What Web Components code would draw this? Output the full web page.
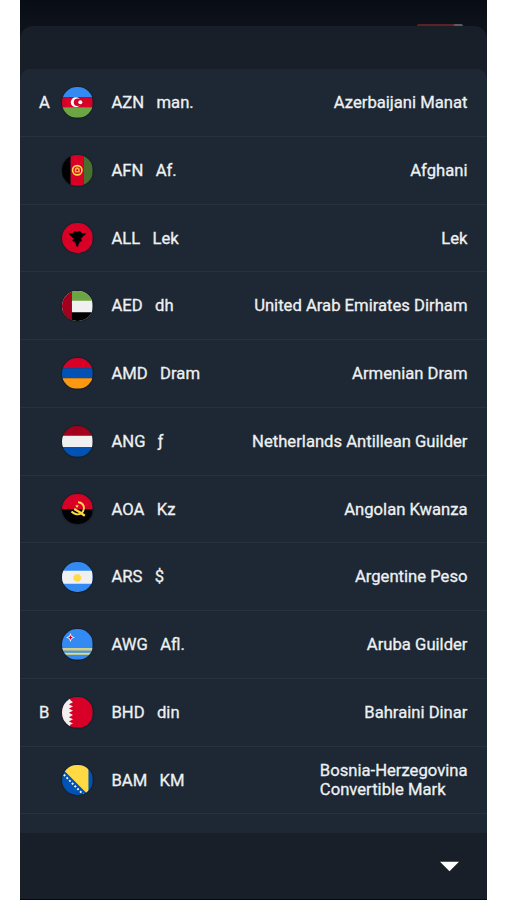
<!DOCTYPE html>
<html lang="en">
<head>
<meta charset="utf-8">
<meta name="viewport" content="width=device-width, initial-scale=1">
<title>Currencies</title>
<style>
  html, body {
    margin: 0;
    height: 100%;
    background: #fff;
    overflow: hidden;
  }
  body {
    font-family: Roboto, "Liberation Sans", sans-serif;
  }
</style>
</head>
<body>
<currency-sheet>
  <currency-row letter="A" code="AZN" symbol="man.">Azerbaijani Manat</currency-row>
  <currency-row code="AFN" symbol="Af.">Afghani</currency-row>
  <currency-row code="ALL" symbol="Lek">Lek</currency-row>
  <currency-row code="AED" symbol="dh">United Arab Emirates Dirham</currency-row>
  <currency-row code="AMD" symbol="Dram">Armenian Dram</currency-row>
  <currency-row code="ANG" symbol="ƒ">Netherlands Antillean Guilder</currency-row>
  <currency-row code="AOA" symbol="Kz">Angolan Kwanza</currency-row>
  <currency-row code="ARS" symbol="$">Argentine Peso</currency-row>
  <currency-row code="AWG" symbol="Afl.">Aruba Guilder</currency-row>
  <currency-row letter="B" code="BHD" symbol="din">Bahraini Dinar</currency-row>
  <currency-row code="BAM" symbol="KM">Bosnia-Herzegovina<br>Convertible Mark</currency-row>
</currency-sheet>

<script>
// every flag is drawn in a 30x30 box and clipped to a circle
const FLAGS = {
  AZN: `
    <path fill="#338af3" d="M0 0h30v10H0z"/>
    <path fill="#d80027" d="M0 10h30v10H0z"/>
    <path fill="#6da544" d="M0 20h30v10H0z"/>
    <circle cx="13.6" cy="15" r="5" fill="#fff"/>
    <circle cx="15.400" cy="15" r="3.800" fill="#d80027"/>
    <circle cx="18" cy="15" r="2" fill="#fff"/>`,
  AFN: `
    <path fill="#000" d="M0 0h8.500v30H0z"/>
    <path fill="#d80027" d="M8.500 0h13v30h-13z"/>
    <path fill="#496e2d" d="M21.500 0H30v30h-8.500z"/>
    <circle cx="15" cy="15" r="4.600" fill="#d80027" stroke="#ffda44" stroke-width="1.600"/>
    <path fill="#ffda44" d="M12.500 17.200v-2.700a2.500 2.500 0 0 1 5 0v2.700z" opacity=".8"/>
    <circle cx="15" cy="15" r="1" fill="#d80027"/>`,
  ALL: `
    <path fill="#d80027" d="M0 0h30v30H0z"/>
    <path fill="#000" stroke="#000" stroke-width=".5" d="M23 10.300h-4.600c.6-.6.400-1.500-.4-1.800-.9-.3-2.200-.2-3 .5-.8-.7-2.100-.8-3-.5-.8.300-1 1.200-.4 1.800H7c.3 1.500 1.500 2.300 2.700 2.400-.1 1.100.7 2 1.900 2.100l.4 0c-.2.900-.9 1.700-1.700 2.300l1.300 1.200 1.700-.7-.5 2 1 .3v1.500l1.200 2.200 1.200-2.200v-1.500l1-.3-.5-2 1.700.7 1.300-1.200c-.8-.6-1.500-1.400-1.700-2.300l.4 0c1.200-.1 2-.9 1.900-2.100 1.200-.1 2.400-.9 2.700-2.400z"/>`,
  AED: `
    <path fill="#f0f0f0" d="M0 0h30v30H0z"/>
    <path fill="#6da544" d="M0 0h30v9.500H0z"/>
    <path fill="#000" d="M0 20.800h30V30H0z"/>
    <path fill="#a2001d" d="M0 0h9.800v30H0z"/>`,
  AMD: `
    <path fill="#d80027" d="M0 0h30v10H0z"/>
    <path fill="#0052b4" d="M0 10h30v10H0z"/>
    <path fill="#ff9811" d="M0 20h30v10H0z"/>`,
  ANG: `
    <path fill="#a2001d" d="M0 0h30v9.700H0z"/>
    <path fill="#f0f0f0" d="M0 9.700h30v11H0z"/>
    <path fill="#0052b4" d="M0 20.700h30V30H0z"/>`,
  AOA: `
    <path fill="#d80027" d="M0 0h30v15H0z"/>
    <path fill="#000" d="M0 15h30v15H0z"/>
    <path fill="none" stroke="#ffda44" stroke-width="1.900" d="M15.800 8.200c3.800 0 6.200 2.900 5.700 6.400-.5 3.800-3.900 6-7.300 5.300-1.900-.4-3.500-1.300-4.900-2.700"/>
    <path fill="none" stroke="#ffda44" stroke-width="2.400" d="M12 14.800c3.200 1.700 6.600 3.800 10.400 6.500"/>
    <path fill="#ffda44" d="M14.800 10l.5 1.300h1.500l-1.200.9.400 1.400-1.200-.8-1.200.8.400-1.400-1.200-.9h1.500z"/>`,
  ARS: `
    <path fill="#338af3" d="M0 0h30v30H0z"/>
    <path fill="#f0f0f0" d="M0 8.500h30v13H0z"/>
    <path fill="#ffda44" d="M15 11l1 1.500 1.700-.5 0 1.700 1.600.6-1 1.400 1 1.300-1.600.6 0 1.700-1.700-.5-1 1.500-1-1.500-1.700.5 0-1.700-1.600-.6 1-1.300-1-1.400 1.600-.6 0-1.700 1.700.5z"/>`,
  AWG: `
    <path fill="#338af3" d="M0 0h30v30H0z"/>
    <path fill="#d3cf88" d="M0 18.600h30v2.200H0z"/>
    <path fill="#a9b99b" d="M0 20.800h30v1.200H0z"/>
    <path fill="#e9dd6a" d="M0 23.300h30v2H0z"/>
    <path fill="#f0f0f0" d="M8.300 4l1.300 3 3 1.300-3 1.300-1.300 3.100L7 9.600 4 8.300 7 7z"/>
    <path fill="#d80027" d="M8.300 6l.7 1.600 1.700.7-1.700.7-.7 1.700L7.600 9l-1.700-.7 1.700-.7z"/>`,
  BHD: `
    <path fill="#d80027" d="M0 0h30v30H0z"/>
    <path fill="#f0f0f0" d="M0 0h8v3l2.800 2.100-4 2.100 4 2.100-4 2.100 4 2.100-4 2.100 4 2.100-4 2.100 4 2.100-4 2.100 4 2.100L8 27.300V30H0z"/>`,
  BAM: `
    <path fill="#0052b4" d="M0 0h30v30H0z"/>
    <path fill="#ffda44" d="M2 5.500V0h24v29.500z"/>
    <path fill="none" stroke="#f0f0f0" stroke-width="1.900" stroke-dasharray="1.900 1.900" d="M1.800 9.500l20 20.500"/>`
};

class CurrencyFlag extends HTMLElement {
  constructor () {
    super();
    this.attachShadow({ mode: 'open' });
  }

  connectedCallback () {
    this.shadowRoot.innerHTML = `
      <style>
        :host {
          display: block;
          width: 30.5px;
          height: 30.5px;
          border-radius: 50%;
          overflow: hidden;
          box-shadow: 0 0 1px 0.5px rgba(10, 16, 24, 0.6);
        }
        svg {
          display: block;
          width: 100%;
          height: 100%;
        }
      </style>
      <svg viewBox="0 0 30 30" aria-hidden="true">${FLAGS[this.getAttribute('code')] || ''}</svg>
    `;
  }
}

class CurrencyRow extends HTMLElement {
  constructor () {
    super();
    this.attachShadow({ mode: 'open' });
  }

  connectedCallback () {
    const code = this.getAttribute('code');
    this.shadowRoot.innerHTML = `
      <style>
        :host {
          display: grid;
          grid-template-columns: 23.2px 30.5px 1fr auto;
          align-items: center;
          box-sizing: border-box;
          height: 67.75px;
          padding: 0.3px 19.5px 0 19px;
          border-bottom: 1.5px solid #26323e;
          color: #eef0f2;
          font-size: 16.65px;
          line-height: 19px;
          -webkit-text-stroke: 0.3px #eef0f2;
        }
        .money {
          display: flex;
          gap: 12.3px;
          padding-left: 18.8px;
        }
      </style>
      <span>${this.getAttribute('letter') || ''}</span>
      <currency-flag code="${code}"></currency-flag>
      <div class="money">
        <span>${code}</span>
        <span>${this.getAttribute('symbol')}</span>
      </div>
      <div><slot></slot></div>
    `;
  }
}

class CurrencySheet extends HTMLElement {
  constructor () {
    super();
    this.attachShadow({ mode: 'open' });
    this.shadowRoot.innerHTML = `
      <style>
        :host {
          display: flex;
          flex-direction: column;
          box-sizing: border-box;
          width: 467px;
          height: 900px;
          margin-left: 20px;
          background: linear-gradient(#080c14, #0e131b 26px);
        }
        .backdrop {
          display: flex;
          flex: 0 0 26px;
          align-items: flex-end;
          justify-content: flex-end;
          padding-right: 24px;
        }
        .backdrop i {
          width: 46px;
          height: 2.5px;
          border-radius: 4px 4px 0 0;
          background: linear-gradient(90deg, #5e2226 36px, #5a5c60 38px);
        }
        .sheet {
          display: flex;
          flex: 1;
          flex-direction: column;
          min-height: 0;
          border-radius: 13px 13px 0 0;
          background: #191f29;
        }
        .list {
          flex: 0 0 764px;
          box-sizing: border-box;
          margin-top: 43px;
          border-radius: 10px 10px 0 0;
          background: #1d2834;
          overflow: hidden;
        }
        footer {
          display: flex;
          flex: 1;
          align-items: center;
          justify-content: flex-end;
          padding-right: 28.5px;
          border-bottom: 1px solid #06080f;
        }
        svg {
          display: block;
          width: 19px;
          height: 11px;
        }
      </style>
      <div class="backdrop"><i></i></div>
      <div class="sheet">
        <div class="list"><slot></slot></div>
        <footer>
          <svg viewBox="0 0 20 11"><path fill="#fff" d="M0 .5h20L10 10.500z"/></svg>
        </footer>
      </div>
    `;
  }
}

customElements.define('currency-flag', CurrencyFlag);
customElements.define('currency-row', CurrencyRow);
customElements.define('currency-sheet', CurrencySheet);
</script>
</body>
</html>
